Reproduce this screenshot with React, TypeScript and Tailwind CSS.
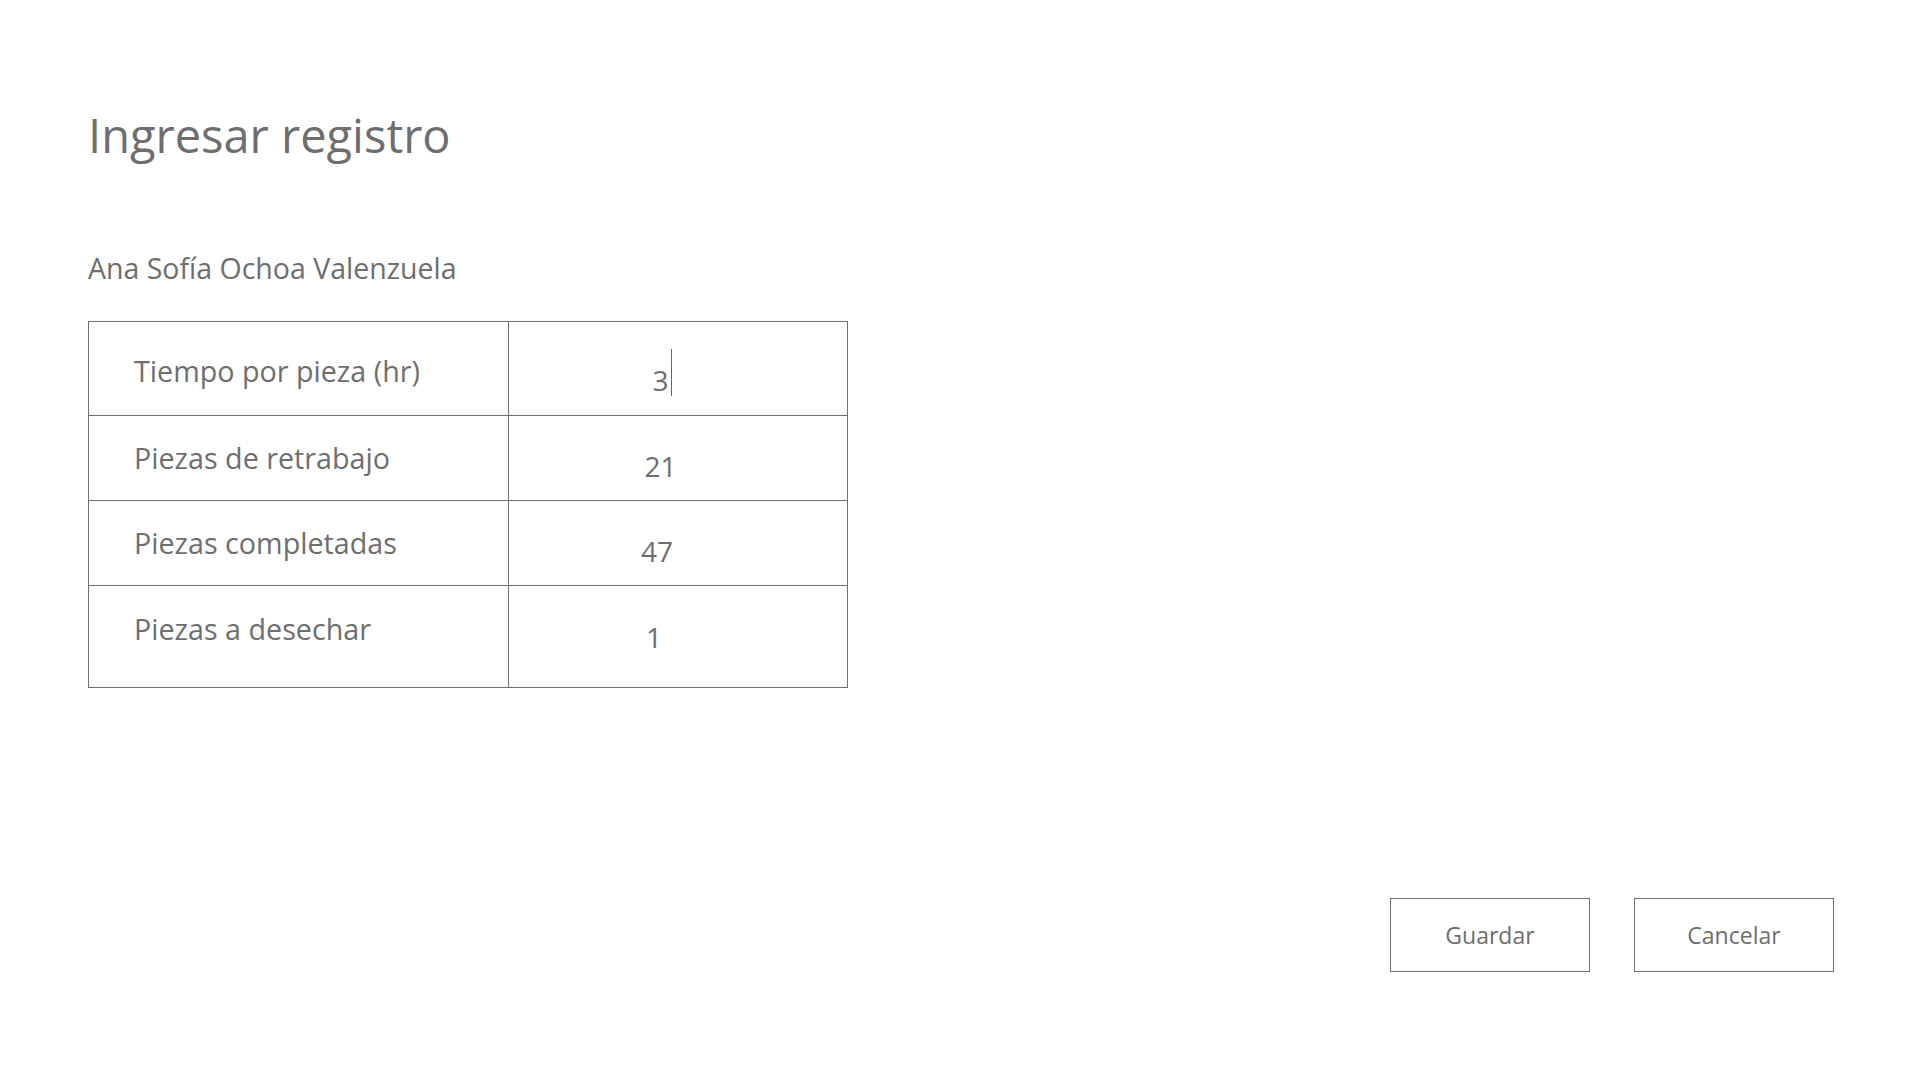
import React from "react";

const rows = [
  { id: 1, label: "Tiempo por pieza (hr)", value: "3", h: "h-[93px]", lpt: "pt-[30px]", vpt: "pt-[39px] pr-[35px]", focused: true },
  { id: 2, label: "Piezas de retrabajo", value: "21", h: "h-[85px]", lpt: "pt-[23px]", vpt: "pt-[31px] pr-[35px]" },
  { id: 3, label: "Piezas completadas", value: "47", h: "h-[85px]", lpt: "pt-[23px]", vpt: "pt-[31px] pr-[42px]" },
  { id: 4, label: "Piezas a desechar", value: "1", h: "h-[102px]", lpt: "pt-[24px]", vpt: "pt-[32px] pr-[48px]" },
];

export default function App() {
  return (
    <div className="w-[1920px] h-[1080px] bg-white px-[88px] text-[#6e6e6e] font-['Open_Sans',_'Noto_Sans',_sans-serif]">
      <h1 className="pt-[103px] text-[47px] leading-[65px] font-normal">Ingresar registro</h1>

      <p className="mt-[81px] text-[28.5px] leading-[38px]">Ana Sofía Ochoa Valenzuela</p>

      {/* Tabla de captura */}
      <div className="mt-[34px] w-[760px] border border-[#707070]">
        {rows.map((row, i) => (
          <div key={row.id} className={`flex ${row.h} ${i > 0 ? "border-t border-[#707070]" : ""}`}>
            <div className={`w-[419px] pl-[45px] ${row.lpt} text-[28.7px] leading-[38px]`}>{row.label}</div>
            <div className={`flex-1 border-l border-[#707070] flex justify-center ${row.vpt}`}>
              <span className="text-[28px] leading-[38px] relative">
                {row.value}
                {row.focused && (
                  <span className="absolute left-full ml-[2px] top-[-12px] w-px h-[47px] bg-[#666]" />
                )}
              </span>
            </div>
          </div>
        ))}
      </div>

      <div className="mt-[210px] -mr-[2px] flex justify-end gap-[44px]">
        <button className="w-[200px] h-[74px] border border-[#707070] bg-white text-[23px] text-[#6e6e6e]">
          Guardar
        </button>
        <button className="w-[200px] h-[74px] border border-[#707070] bg-white text-[23px] text-[#6e6e6e]">
          Cancelar
        </button>
      </div>
    </div>
  );
}
